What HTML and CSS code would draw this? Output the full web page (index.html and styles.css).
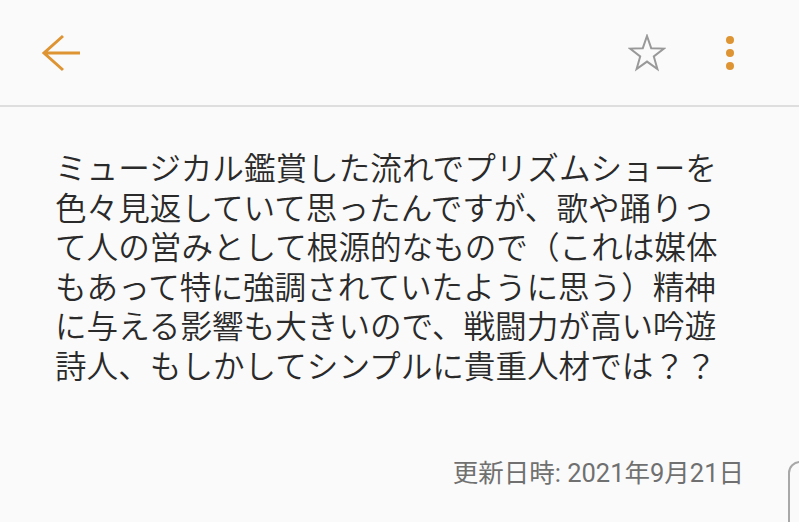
FILE: index.html
```html
<!DOCTYPE html>
<html lang="ja">
<head>
    <meta charset="UTF-8">
    <meta name="viewport" content="width=device-width, initial-scale=1.0">
    <link rel="stylesheet" href="styles.css">
    <title>メモ</title>
</head>
<body>
    <div id="memo-screen">
        <div class="top-bar">
            <button class="icon-btn back-btn" aria-label="戻る">
                <svg width="40" height="40" viewBox="0 0 40 40">
                    <path d="M21 3 L2 20 L21 37 M2 20 H38" fill="none" stroke="#de9433" stroke-width="3" stroke-linejoin="miter"/>
                </svg>
            </button>
            <div class="top-actions">
                <button class="icon-btn star-btn" aria-label="お気に入り">
                    <svg width="38" height="38" viewBox="0 0 38 38">
                        <path d="M19 2 L23.2 14.2 L36 14.6 L25.8 22.4 L29.4 35 L19 27.6 L8.6 35 L12.2 22.4 L2 14.6 L14.8 14.2 Z" fill="none" stroke="#999" stroke-width="2" stroke-linejoin="miter"/>
                    </svg>
                </button>
                <button class="icon-btn more-btn" aria-label="その他">
                    <span class="dot"></span>
                    <span class="dot"></span>
                    <span class="dot"></span>
                </button>
            </div>
        </div>

        <div class="memo-body">
            <p class="memo-text">ミュージカル鑑賞した流れでプリズムショーを色々見返していて思ったんですが、歌や踊りって人の営みとして根源的なもので（これは媒体もあって特に強調されていたように思う）精神に与える影響も大きいので、戦闘力が高い吟遊詩人、もしかしてシンプルに貴重人材では？？</p>
            <div class="memo-meta">更新日時: 2021年9月21日</div>
        </div>

        <div class="edit-fab"></div>
    </div>
</body>
</html>
```

FILE: styles.css
```css
html, body {
    margin: 0;
    padding: 0;
    background-color: #fafafa;
}

body {
    font-family: 'Noto Sans CJK JP', 'Noto Sans', sans-serif;
}

#memo-screen {
    position: relative;
    width: 799px;
    height: 522px;
    overflow: hidden;
    background-color: #fafafa;
}

.top-bar {
    height: 107px;
    border-bottom: 2px solid #dedede;
    display: flex;
    justify-content: space-between;
    align-items: center;
    padding: 0 65px 0 42px;
    box-sizing: border-box;
}

.icon-btn {
    background: none;
    border: none;
    padding: 0;
    margin: 0;
    cursor: pointer;
    display: flex;
    align-items: center;
    justify-content: center;
}

.back-btn svg {
    display: block;
    margin-top: 1px;
}

.top-actions {
    display: flex;
    align-items: center;
    gap: 60px;
}

.star-btn svg {
    display: block;
    margin-top: 1px;
}

.more-btn {
    flex-direction: column;
    gap: 5px;
    width: 8px;
    margin-top: 1px;
}

.dot {
    width: 8px;
    height: 8px;
    border-radius: 50%;
    background-color: #de9433;
}

.memo-body {
    padding: 40px 55px 0 55px;
}

.memo-text {
    margin: 0;
    width: 670px;
    font-size: 31.6px;
    font-weight: 350;
    line-height: 39.5px;
    color: #2a2a2a;
    word-break: break-all;
}

.memo-meta {
    margin-top: 68px;
    text-align: right;
    padding-right: 0;
    font-family: 'Roboto', 'Noto Sans CJK JP', sans-serif;
    font-size: 25.5px;
    color: #707070;
}

.edit-fab {
    position: absolute;
    left: 788px;
    top: 461px;
    width: 60px;
    height: 100px;
    border: 2px solid #a8a8a8;
    border-radius: 12px;
}
```
